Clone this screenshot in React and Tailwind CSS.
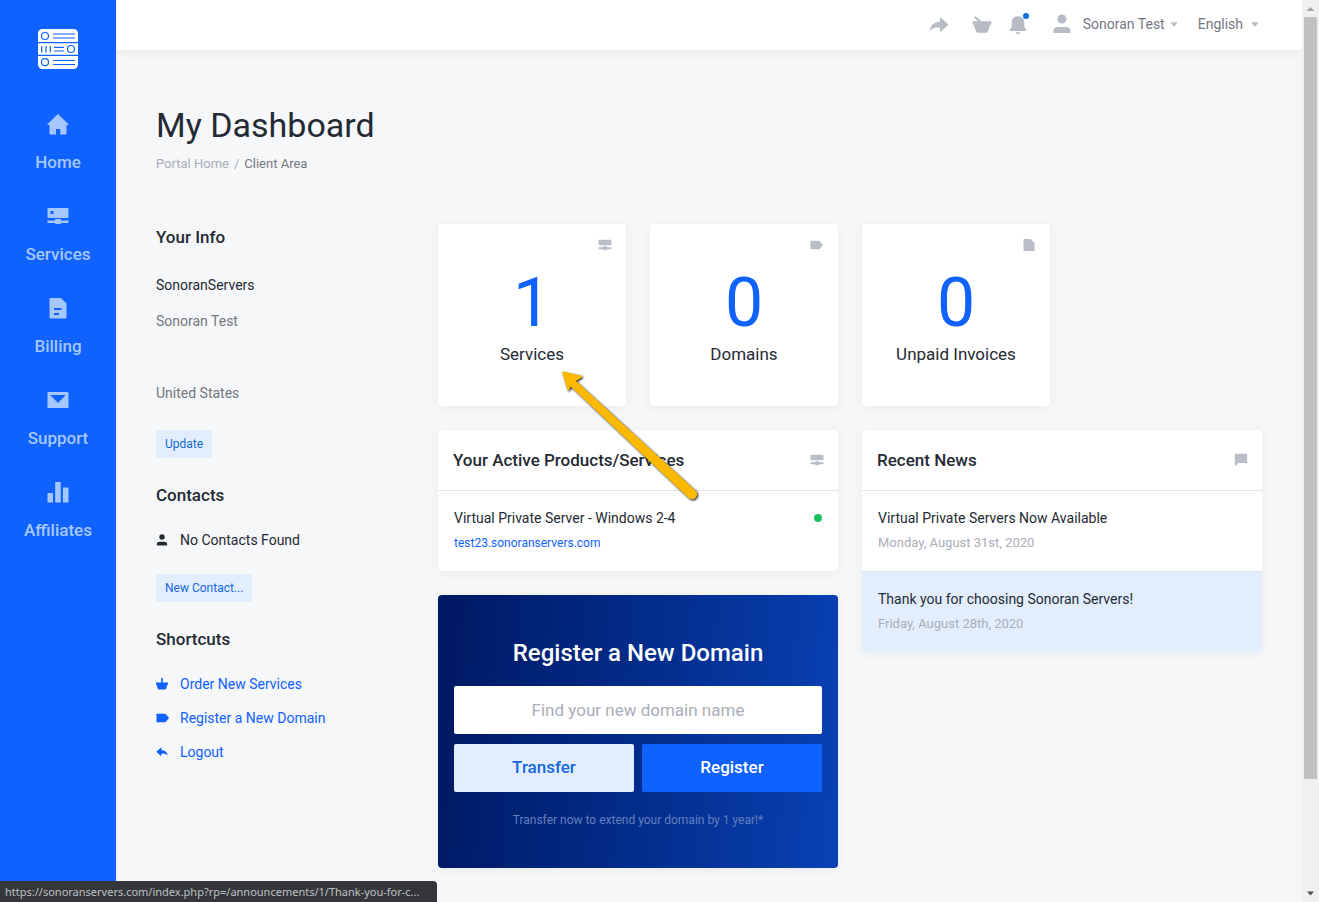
import React from "react";

const HomeIcon = () => (
  <svg viewBox="0 0 24 24" className="size-6" fill="currentColor" aria-hidden="true">
    <path d="M12 2 L22.6 12.3 Q22.8 13 22 13 H20.5 V21.5 Q20.5 22.5 19.500 22.500 H14.200 V17 H10 V22.500 H4.500 Q3.500 22.500 3.500 21.500 V13 H2 Q1.200 13 1.400 12.300 L11.300 2.600 Z" />
  </svg>
);

const ServerIcon = () => (
  <svg viewBox="0 0 24 24" className="size-6" fill="currentColor" fillRule="evenodd" aria-hidden="true">
    <path d="M2.500 4H21.500Q22.500 4 22.500 5V13Q22.500 14 21.500 14H2.500Q1.500 14 1.500 13V5Q1.500 4 2.500 4ZM4.500 7V10H7.500V7Z" />
    <path d="M1.500 16.500H9V16Q9 15 10 15H14Q15 15 15 16V16.500H22.500V19H15Q15 20 14 20H10Q9 20 9 19H1.500Z" />
  </svg>
);

const BillIcon = () => (
  <svg viewBox="0 0 24 24" className="size-6" fill="currentColor" fillRule="evenodd" aria-hidden="true">
    <path d="M4.500 2H15L20.500 7.500V21.500Q20.500 22.500 19.500 22.500H4.500Q3.500 22.500 3.500 21.500V3Q3.500 2 4.500 2ZM8 12V14H15.500V12ZM8 17V19H13V17Z" />
  </svg>
);

const MailIcon = () => (
  <svg viewBox="0 0 24 24" className="size-6" fill="currentColor" fillRule="evenodd" aria-hidden="true">
    <path d="M2.500 4H21.500Q22.500 4 22.500 5V20H1.500V5Q1.500 4 2.500 4ZM4.200 7L12 15L19.800 7Z" />
  </svg>
);

const BarsIcon = () => (
  <svg viewBox="0 0 24 24" className="size-6" fill="currentColor" aria-hidden="true">
    <rect x="1.500" y="13" width="5.500" height="9.500" rx="0.600" />
    <rect x="9.200" y="2" width="5.500" height="20.500" rx="0.600" />
    <rect x="17" y="7.500" width="5.500" height="15" rx="0.600" />
  </svg>
);

const Logo = () => (
  <svg viewBox="0 0 40 40" className="size-10" fill="none" stroke="#0f62fe" aria-hidden="true">
    <rect width="40" height="40" rx="4.500" fill="#fff" stroke="none" />
    <path d="M0 13.700H40M0 26.300H40" strokeWidth="1.200" />
    <g strokeWidth="1.200">
      <circle cx="7" cy="7" r="3.500" />
      <circle cx="33" cy="20" r="3.500" />
      <circle cx="7" cy="33.200" r="3.500" />
      <path d="M15 5H37M15 9H37M3.700 17V23.500M8 17V23.500M12.300 17V23.500M16 18.300H26M16 22H26M15 31.500H37M15 35.500H37" />
    </g>
  </svg>
);

const ServerSmall = () => (
  <svg viewBox="0 0 14 12" className="h-3 w-3.5" fill="currentColor" aria-hidden="true">
    <path d="M1.200 0.700H12.800Q13.500 0.700 13.500 1.400V6.200H0.500V1.400Q0.500 0.700 1.200 0.700ZM0.500 8.200H4.500Q5 7.300 6 7.300H8Q9 7.300 9.500 8.200H13.500V10.200H9.500Q9 11.200 8 11.200H6Q5 11.200 4.500 10.200H0.500Z" />
  </svg>
);

const TagSmall = () => (
  <svg viewBox="0 0 14 12" className="h-3 w-3.5" fill="currentColor" aria-hidden="true">
    <path d="M1 1.700H8.800Q9.300 1.700 9.700 2.100L13 6L9.700 9.900Q9.300 10.300 8.800 10.300H1Q0.500 10.300 0.500 9.700V2.300Q0.500 1.700 1 1.700Z" />
  </svg>
);

const FileSmall = () => (
  <svg viewBox="0 0 14 14" className="size-3.5" fill="currentColor" aria-hidden="true">
    <path d="M2 1H8.500L12.500 4.800V13H2Q1.500 13 1.500 12.500V1.500Q1.500 1 2 1Z" />
  </svg>
);

const ChatSmall = () => (
  <svg viewBox="0 0 14 14" className="size-3.5" fill="currentColor" aria-hidden="true">
    <path d="M1.500 0.700H12.500Q13.200 0.700 13.200 1.400V10H4.500L1.600 12.700Q0.800 13.200 0.800 12V1.400Q0.800 0.700 1.500 0.700Z" />
  </svg>
);

const PersonIcon = ({ className }) => (
  <svg viewBox="0 0 18 20" className={className} fill="currentColor" aria-hidden="true">
    <circle cx="9" cy="5" r="4.500" />
    <path d="M0.500 19V17Q0.500 13 5.500 13H12.500Q17.500 13 17.500 17V19Z" />
  </svg>
);

const ShareIcon = ({ className }) => (
  <svg viewBox="0 0 20 16" className={className} fill="currentColor" aria-hidden="true">
    <path d="M11 0.800Q11.200 0.400 11.700 0.700L19 7Q19.600 7.500 19 8L11.900 14.500Q11 15 11 14.200V10.800Q4.500 9.800 0.600 14Q1.200 5.500 11 4.500Z" />
  </svg>
);

const BasketIcon = () => (
  <svg viewBox="0 0 20 18" className="h-[18px] w-5" fill="currentColor" aria-hidden="true">
    <path d="M2.300 1L3.900 0.200L9.300 5.300H18.700Q19.400 5.300 19.400 6V7.700Q19.400 8.400 18.300 8.800L15.900 15.500Q15.500 16.800 14.200 16.800H5.800Q4.500 16.800 4.100 15.500L1.700 8.800Q0.600 8.400 0.600 7.700V6Q0.600 5.300 1.300 5.300H6.200L2.100 1.700Z" />
  </svg>
);

const BellIcon = () => (
  <svg viewBox="0 0 18 20" className="h-5 w-[18px]" fill="currentColor" aria-hidden="true">
    <path d="M9 1.200Q15 1.600 15.300 7.200V11Q15.300 13 17.400 14.500Q17.800 15.800 16.500 16H1.500Q0.200 15.800 0.600 14.500Q2.700 13 2.700 11V7.200Q3 1.600 9 1.200Z" />
    <path d="M6.500 17.300H11.500Q11 19.200 9 19.200T6.500 17.300Z" />
  </svg>
);

const BasketSmall = () => (
  <svg viewBox="0 0 12 12" className="size-3" fill="currentColor" aria-hidden="true">
    <path d="M5.200 0H6.800V4.500H5.200ZM0 4.500H12V6.600L11.200 7L10.300 10.500Q10 11.600 9 11.600H3Q2 11.600 1.700 10.500L0.800 7L0 6.600Z" />
  </svg>
);

const Caret = () => (
  <svg viewBox="0 0 8 5" className="h-[5px] w-2" fill="#b6bbc5" aria-hidden="true">
    <path d="M1.200 0.300H6.800Q7.600 0.500 7 1.200L4.500 4.200Q4 4.600 3.500 4.200L1 1.200Q0.400 0.500 1.200 0.300Z" />
  </svg>
);

const nav = [
  ["Home", HomeIcon],
  ["Services", ServerIcon],
  ["Billing", BillIcon],
  ["Support", MailIcon],
  ["Affiliates", BarsIcon],
];

const stats = [
  ["1", "Services", ServerSmall],
  ["0", "Domains", TagSmall],
  ["0", "Unpaid Invoices", FileSmall],
];

const news = [
  ["Virtual Private Servers Now Available", "Monday, August 31st, 2020", "bg-white"],
  ["Thank you for choosing Sonoran Servers!", "Friday, August 28th, 2020", "border-t border-[#dde3ec] bg-[#e2eefd]"],
];

const cardShadow = "shadow-[0_2px_10px_rgba(40,50,70,0.06)]";
const smallButton = "h-7 rounded-xs bg-[#e2eefd] px-[9px] text-xs text-[#1668dc]";
const sideHeading = "text-[17px] leading-6 font-medium text-[#242a33]";

function Sidebar() {
  return (
    <aside className="relative z-10 flex w-[116px] shrink-0 flex-col items-center bg-[#0f62fe] pt-[29px]">
      <a href="#home" aria-label="Sonoran Servers">
        <Logo />
      </a>
      <nav className="mt-[43px] flex flex-col gap-[30px]">
        {nav.map(([label, Icon]) => (
          <a key={label} href={"#" + label} className="flex flex-col items-center gap-3.5 text-[17px] leading-6 font-medium text-[#a6c6ff]">
            <Icon />
            {label}
          </a>
        ))}
      </nav>
    </aside>
  );
}

function Header() {
  return (
    <header className="flex h-[50px] items-center justify-end bg-white pr-[43px] pb-0.5 text-sm text-[#74777f] shadow-[0_2px_10px_rgba(40,50,70,0.07)]">
      <div className="flex items-center pt-0.5 text-[#b6bbc5]">
        <button type="button" aria-label="Share"><ShareIcon className="h-4 w-5" /></button>
        <button type="button" aria-label="Cart" className="ml-[23px]"><BasketIcon /></button>
        <button type="button" aria-label="Notifications" className="relative ml-[17px]">
          <BellIcon />
          <span className="absolute -top-0.5 -right-0.5 size-1.5 rounded-full bg-[#0c70e6]" />
        </button>
      </div>
      <button type="button" className="ml-[26px] flex items-center">
        <PersonIcon className="h-5 w-[18px] text-[#b6bbc5]" />
        <span className="mr-[5px] ml-3">Sonoran Test</span>
        <Caret />
      </button>
      <button type="button" className="ml-5 flex items-center gap-2">
        English
        <Caret />
      </button>
    </header>
  );
}

function InfoColumn() {
  return (
    <aside className="w-[258px] shrink-0 pt-px text-sm">
      <h2 className={sideHeading}>Your Info</h2>
      <div className="mt-[18px] mb-[19px] leading-9 text-[#74777f]">
        <p className="text-[#242a33]">SonoranServers</p>
        <p className="mb-9">Sonoran Test</p>
        <p>United States</p>
      </div>
      <button type="button" className={smallButton}>Update</button>
      <h2 className={sideHeading + " mt-[25px]"}>Contacts</h2>
      <p className="mt-4 mb-[17px] flex items-center leading-[34px] text-[#242a33]">
        <PersonIcon className="mr-3 h-3 w-3" />
        No Contacts Found
      </p>
      <button type="button" className={smallButton}>New Contact...</button>
      <h2 className={sideHeading + " mt-[25px]"}>Shortcuts</h2>
      <nav className="mt-4 flex flex-col leading-[34px] text-[#0f62fe]">
        <a href="#order" className="flex items-center gap-3"><BasketSmall />Order New Services</a>
        <a href="#register" className="flex items-center gap-3">
          <span className="-mr-0.5"><TagSmall /></span>Register a New Domain
        </a>
        <a href="#logout" className="flex items-center gap-3">
          <ShareIcon className="h-3 w-3 -scale-x-100" />Logout
        </a>
      </nav>
    </aside>
  );
}

function PanelHeader({ title, icon }) {
  return (
    <div className="flex h-[61px] items-center justify-between border-b border-[#e3e5e8] pr-3.5 pl-[15px]">
      <h2 className="text-[17px] leading-6 font-medium text-[#242a33]">{title}</h2>
      <span className="text-[#b9bec8]">{icon}</span>
    </div>
  );
}

function RegisterPanel() {
  return (
    <form
      onSubmit={(e) => e.preventDefault()}
      className={"rounded-sm bg-linear-95 from-[#001862] to-[#0a41b5] px-4 pt-[42px] pb-[38px] text-center " + cardShadow}
    >
      <h2 className="text-2xl leading-8 font-medium text-white">Register a New Domain</h2>
      <input
        type="text"
        aria-label="Find your new domain name"
        placeholder="Find your new domain name"
        className="mt-[17px] block h-12 w-full rounded-xs bg-white text-center text-[17px] text-[#242a33] placeholder:text-[#a9aeb8]"
      />
      <div className="mt-2.5 grid grid-cols-2 gap-2 text-[17px] font-medium">
        <button type="button" className="h-12 rounded-xs bg-[#e2eefd] text-[#1668dc]">Transfer</button>
        <button type="submit" className="h-12 rounded-xs bg-[#0f62fe] text-white">Register</button>
      </div>
      <p className="mt-[18px] text-xs leading-5 text-[#647fbd]">Transfer now to extend your domain by 1 year!*</p>
    </form>
  );
}

function Arrow() {
  return (
    <svg viewBox="0 0 160 150" className="pointer-events-none absolute top-[136px] left-28 h-[150px] w-[160px] drop-shadow-[1px_1px_1px_rgba(0,0,0,0.9)]" aria-hidden="true">
      <path
        d="M13 11.500L31.500 15.800Q33 16.600 31.500 17.600L26 21L145.400 130.500A5 5 0 0 1 138.600 138L20.700 26.500L19 30.200Q18 31.300 17.500 29.800L12.200 12.300Q12.200 11.500 13 11.500Z"
        fill="#fcb900"
      />
    </svg>
  );
}

function ScrollRail() {
  return (
    <div className="flex w-[17px] shrink-0 flex-col items-center bg-[#f0f0f0]" aria-hidden="true">
      <svg viewBox="0 0 17 17" className="size-[17px]"><path d="M4.500 11L8.500 7L12.500 11Z" fill="#a3a3a3" /></svg>
      <div className="w-[13px] grow-[762] bg-[#c1c1c1]" />
      <div className="grow-[106]" />
      <svg viewBox="0 0 17 17" className="size-[17px]"><path d="M5 6.500H12L8.500 10.500Z" fill="#505050" /></svg>
    </div>
  );
}

export default function App() {
  return (
    <div className="flex min-h-screen bg-[#f6f7f9] font-['Roboto',sans-serif]">
      <Sidebar />
      <div className="min-w-0 flex-1">
        <Header />
        <main className="px-10 pt-[51px] pb-8">
          <h1 className="text-[34px] leading-[48px] text-[#242a33]">My Dashboard</h1>
          <nav aria-label="Breadcrumb" className="mt-[5px] flex gap-[5px] text-[13px] leading-5 text-[#a9aeb8]">
            <a href="#portal">Portal Home</a>
            <span>/</span>
            <span className="text-[#74777f]">Client Area</span>
          </nav>
          <div className="mt-[50px] flex items-start gap-6">
            <InfoColumn />
            <div className="relative min-w-0 flex-1">
              <section className="grid grid-cols-4 gap-6">
                {stats.map(([count, label, Icon]) => (
                  <a key={label} href={"#" + label} className={"flex h-[182px] flex-col rounded-sm bg-white text-center " + cardShadow}>
                    <span className="flex h-[42px] items-center justify-end pr-3.5 text-[#b9bec8]"><Icon /></span>
                    <span className="text-[68px] leading-[74px] text-[#0f62fe]">{count}</span>
                    <span className="mt-0.5 text-[17px] leading-6 text-[#242a33]">{label}</span>
                  </a>
                ))}
              </section>
              <div className="mt-6 grid grid-cols-2 items-start gap-6">
                <div className="flex flex-col gap-6">
                  <section className={"rounded-sm bg-white " + cardShadow}>
                    <PanelHeader title="Your Active Products/Services" icon={<ServerSmall />} />
                    <div className="flex items-start justify-between px-4 pt-[15px] pb-4">
                      <div>
                        <p className="mb-px text-sm leading-6 text-[#242a33]">Virtual Private Server - Windows 2-4</p>
                        <a href="#test23" className="block text-xs leading-6 text-[#0f62fe]">test23.sonoranservers.com</a>
                      </div>
                      <span className="mt-2 size-2 rounded-full bg-[#1fbe63]" />
                    </div>
                  </section>
                  <RegisterPanel />
                </div>
                <section className={"overflow-hidden rounded-sm bg-white " + cardShadow}>
                  <PanelHeader title="Recent News" icon={<ChatSmall />} />
                  {news.map(([title, date, style]) => (
                    <a key={title} href={"#" + date} className={"block px-4 pt-[15px] pb-4 " + style}>
                      <p className="mb-px text-sm leading-6 text-[#242a33]">{title}</p>
                      <p className="text-[13px] leading-6 text-[#a9aeb8]">{date}</p>
                    </a>
                  ))}
                </section>
              </div>
              <Arrow />
            </div>
          </div>
        </main>
      </div>
      <ScrollRail />
      <div className="fixed bottom-0 left-0 z-20 h-[21px] rounded-tr-sm bg-[#35363a] pr-[18px] pl-[5px] font-['Noto_Sans',sans-serif] text-[11px] leading-[21px] text-[#bdc1c6]">
        https://sonoranservers.com/index.php?rp=/announcements/1/Thank-you-for-c...
      </div>
    </div>
  );
}
